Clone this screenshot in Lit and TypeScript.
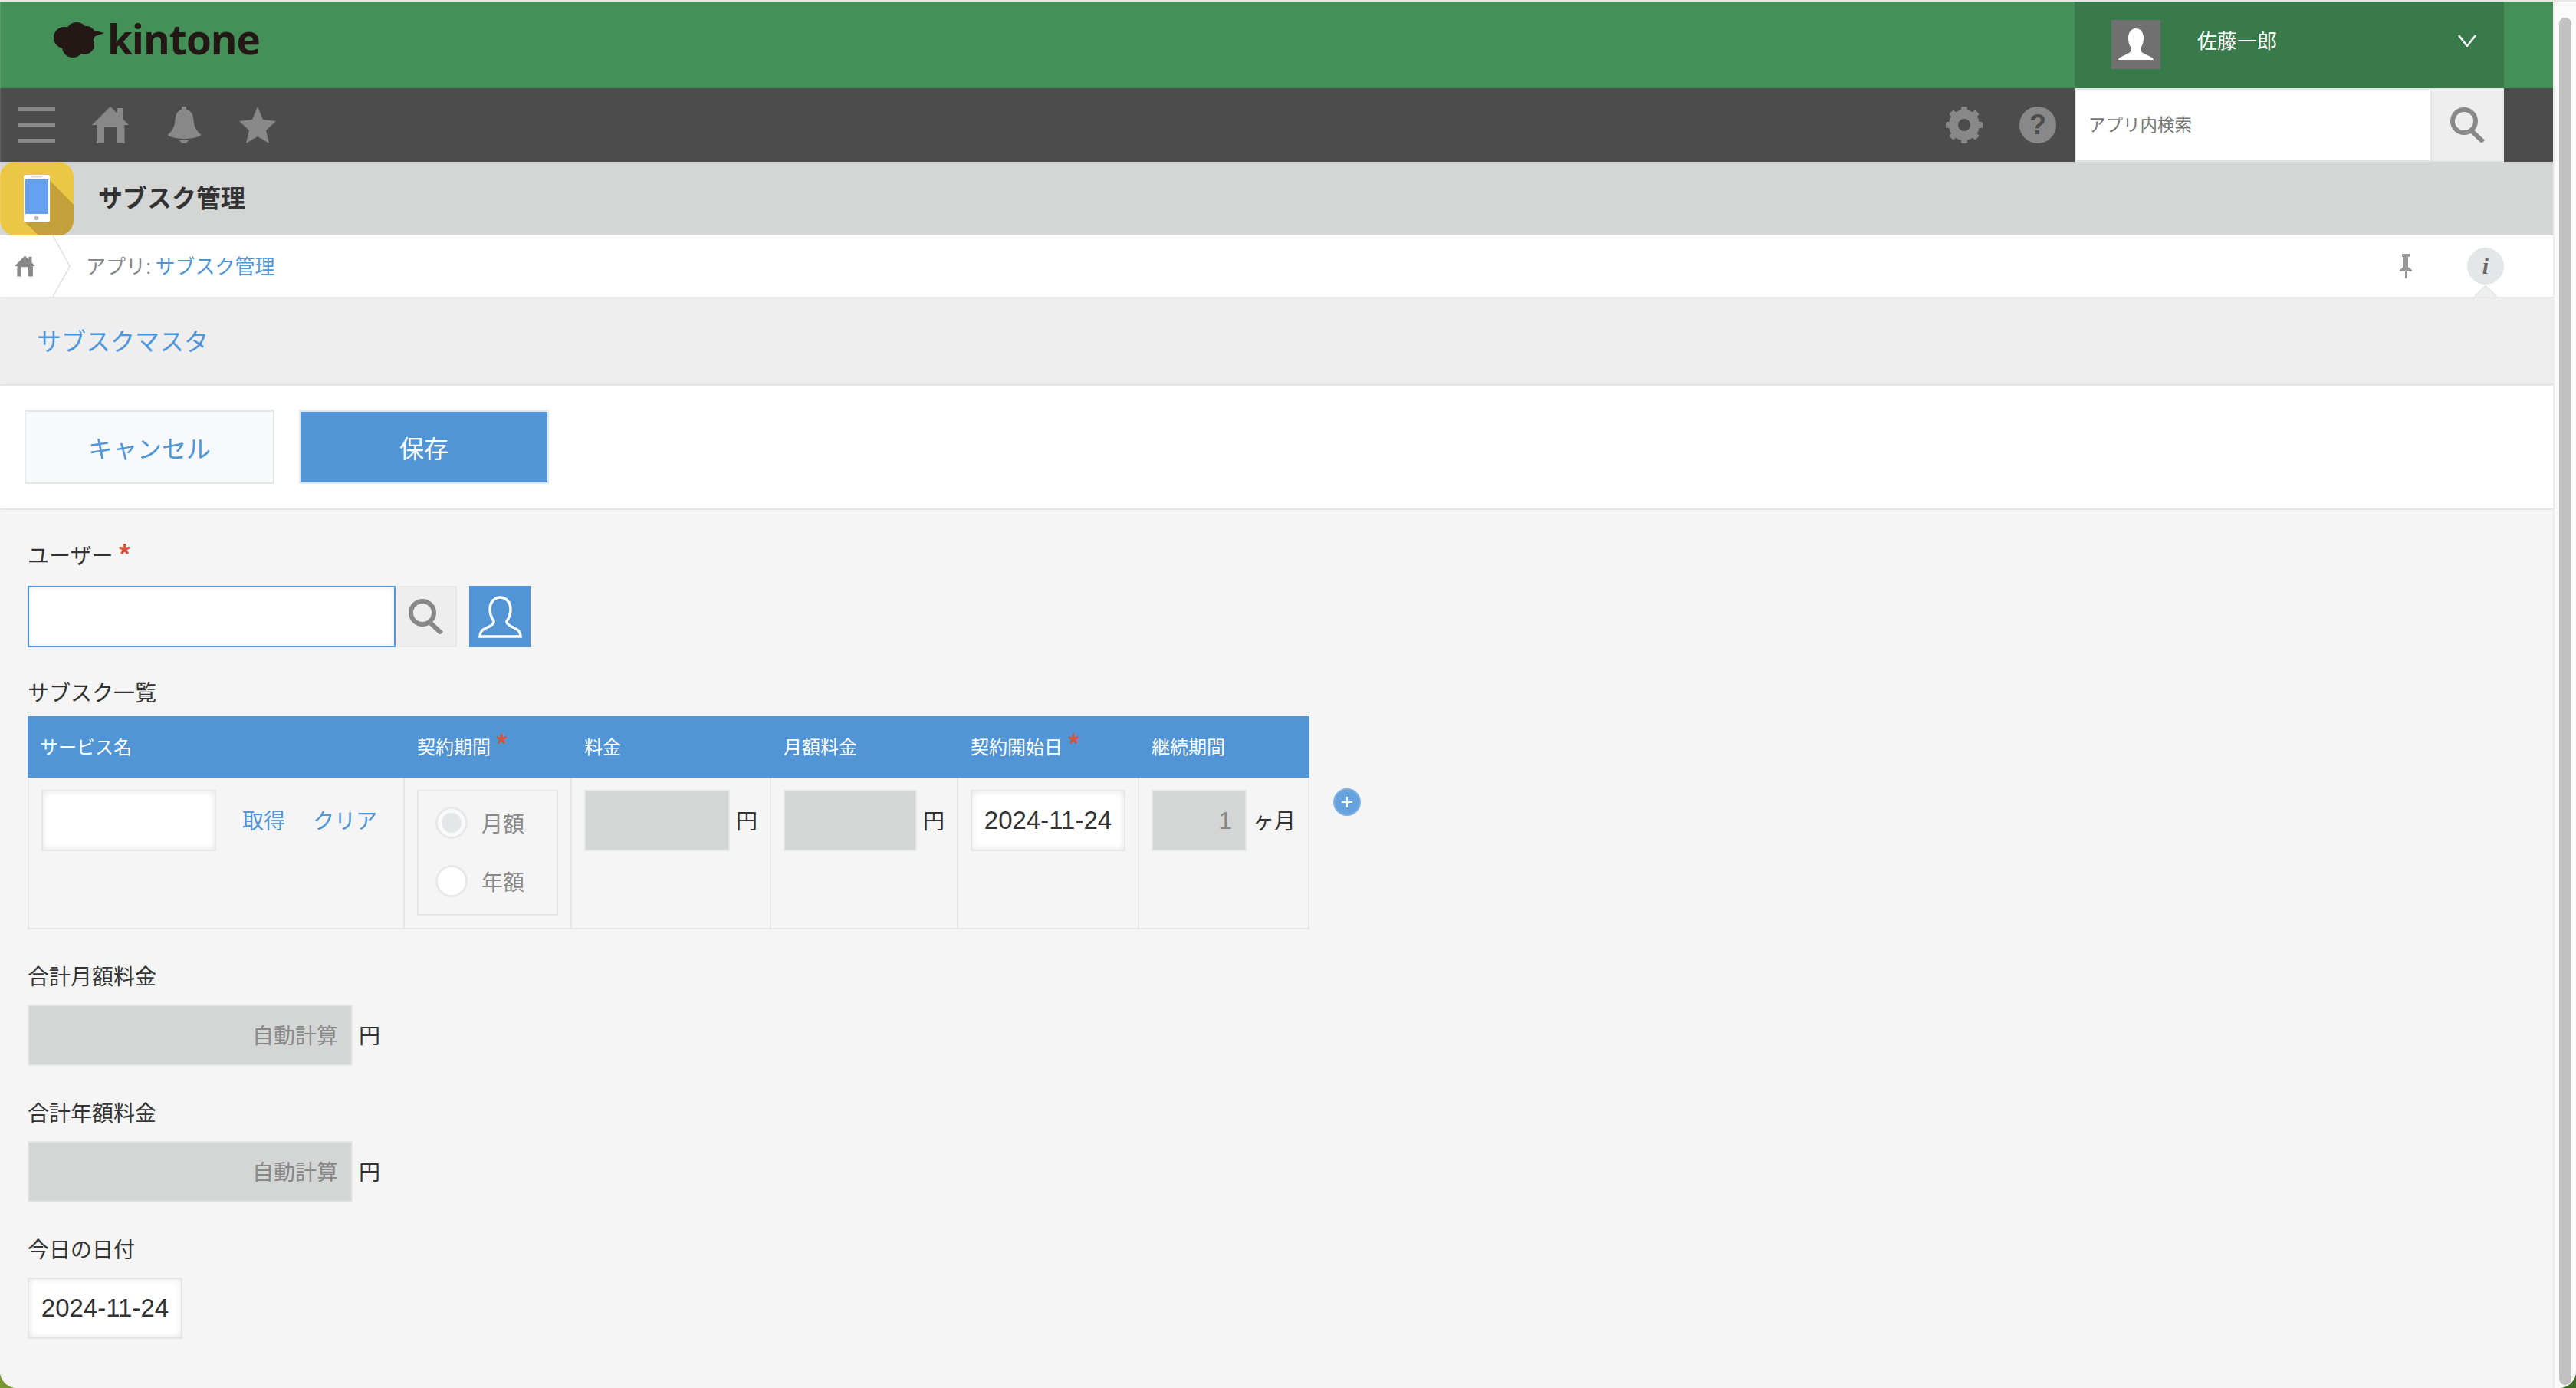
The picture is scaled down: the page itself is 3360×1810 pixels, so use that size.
import { LitElement, html, css, svg } from "lit";
import { customElement } from "lit/decorators.js";

const searchIcon = html`<svg class="search-ic" viewBox="0 0 46 46"><circle cx="19" cy="18" r="15" fill="none" stroke="#888" stroke-width="6"/><path d="M28 30 L44 45" stroke="#888" stroke-width="6" fill="none"/></svg>`;
const homePath = "M24 0 L33 9 V2 H40 V16 L48 24 H42.500 V48 H32 V26 H16 V48 H6 V24 H0 Z";

@customElement("app-root")
export class AppRoot extends LitElement {
  static styles = css`
    :host { display: block; width: 3360px; height: 1810px; overflow: hidden;
      background: linear-gradient(90deg, #76972f, #3f6b24);
      font-family: "Liberation Sans", "Noto Sans CJK JP", sans-serif; color: #333; }
    * { box-sizing: border-box; }
    svg { display: block; flex: none; }
    .window { position: relative; display: flex; height: 1810px; border-top: 2px solid #e6e8e8; border-radius: 0 0 22px 22px; overflow: hidden; background: #f5f5f5; }
    .window::after { content: ""; position: absolute; left: 0; top: 0; bottom: 0; width: 1px; background: rgba(255, 255, 255, 0.12); pointer-events: none; }
    .main { width: 3330px; flex: none; display: flex; flex-direction: column; }
    .scrollbar { flex: 1; background: #fafafa; border-left: 2px solid #ececec; padding: 21px 6px 4px 6px; }
    .thumb { height: 100%; background: #c1c1c1; border-radius: 8px; }

    .greenbar { height: 113px; flex: none; background: #459059; display: flex; align-items: center; padding-left: 70px; padding-right: 64px; }
    .logo { display: flex; align-items: center; gap: 4px; margin-top: -14px; }
    .logotext { font-family: "Open Sans", sans-serif; font-weight: 700; font-size: 53px; line-height: 46px; color: #231815; letter-spacing: -1px; margin-top: -2px; }
    .user { margin-left: auto; width: 560px; height: 113px; background: #397a4b; display: flex; align-items: center; padding-left: 48px; padding-right: 36px; color: #fff; }
    .avatar { width: 64px; height: 64px; background: #707070; margin-top: -2px; }
    .username { font-size: 26px; margin-left: 48px; margin-top: -15px; }
    .chev { margin-left: auto; margin-top: -12px; }

    .darkbar { height: 96px; flex: none; background: #4c4c4c; display: flex; align-items: center; padding-left: 24px; padding-right: 64px; gap: 48px; }
    .dark-ic { width: 48px; height: 48px; fill: #888; }
    .spacer { margin-left: auto; }
    .help { width: 48px; height: 48px; border-radius: 50%; background: #888; color: #4c4c4c; font-weight: 700; font-size: 36px; line-height: 48px; text-align: center; }
    .search { width: 560px; height: 96px; margin-left: -24px; display: flex; border: 2px solid #e3e7e8; background: #e3e7e8; gap: 2px; }
    .search-input { flex: 1; background: #fff; font-size: 22.500px; color: #777; display: flex; align-items: center; padding: 0 0 4px 16px; }
    .search-btn { width: 92px; background: #eee; display: flex; align-items: center; justify-content: center; }
    .search-ic { width: 46px; height: 46px; }

    .titlebar { height: 96px; flex: none; background: #d4d6d5; display: flex; align-items: center; }
    .apptitle { font-size: 32px; font-weight: 700; margin: -6px 0 0 32px; color: #333; }

    .crumb { height: 82px; flex: none; background: #fff; border-bottom: 2px solid #e3e7e8; display: flex; align-items: center; padding-left: 19px; padding-right: 64px; }
    .crumb-home { width: 27px; height: 28px; fill: #888; }
    .crumb-chev { margin-left: 22px; margin-right: 20px; }
    .crumb-text { font-size: 26px; color: #888; margin-top: -3px; word-spacing: -2px; }
    a { color: #4f96d8; text-decoration: none; }
    .pin { margin-left: auto; margin-right: 72px; }
    .info { position: relative; width: 48px; height: 48px; border-radius: 50%; background: #e3e7e8; color: #666; text-align: center; font: italic 700 30px/48px "Liberation Serif", serif; }
    .info-tip { position: absolute; left: 9px; top: 49px; }

    .subhead { height: 114px; flex: none; background: #eee; border-bottom: 3px solid #e3e7e8; display: flex; align-items: center; padding: 0 0 4px 48px; font-size: 32px; }
    .actions { height: 162px; flex: none; background: #fff; border-bottom: 2px solid #e3e7e8; display: flex; gap: 32px; padding: 32px 0 0 32px; }
    .btn { width: 326px; height: 96px; border: 2px solid #e3e7e8; display: flex; align-items: center; justify-content: center; font-size: 32px; padding-bottom: 1px; }
    .btn.cancel { background: #f7f9fa; color: #4f96d8; }
    .btn.save { background: #5295d6; color: #fff; }

    .content { flex: 1; padding: 40px 0 0 36px; background: #f5f5f5; }
    .label { height: 40px; line-height: 40px; font-size: 28px; color: #333; padding-top: 1px; }
    .req { color: #d9533c; font-family: "Noto Sans CJK JP", sans-serif; font-weight: 700; font-size: 36px; line-height: 0; margin-left: 6px; position: relative; top: 3px; }
    .field { margin-top: 42px; }
    .field .label { margin-bottom: 16px; }
    .field.first { margin-top: 0; }
    .field.first .label { margin-bottom: 19px; }
    .field.list { margin-top: 40px; }
    .field.list .label { margin-bottom: 10px; }
    .row { display: flex; align-items: center; height: 80px; }

    .userinput { width: 480px; height: 80px; border: 2px solid #5295d6; background: #fff; box-shadow: inset 0 0 6px #e8e8e8; }
    .lookup { width: 80px; height: 80px; background: #eee; border: 2px solid #e3e7e8; border-left: 0; display: flex; align-items: center; justify-content: center; }
    .userbtn { width: 80px; height: 80px; background: #5295d6; margin-left: 16px; display: flex; align-items: center; justify-content: center; }

    .ctrl { height: 80px; border: 2px solid #e3e7e8; flex: none; font-size: 28px; display: flex; align-items: center; }
    .ctrl.white { background: #fff; box-shadow: inset 0 0 8px #e4e4e4; }
    .ctrl.gray { background: #d4d6d5; color: #888; justify-content: flex-end; padding-right: 17px; padding-bottom: 2px; }
    .ctrl.date { width: 202px; justify-content: center; font-size: 33px; color: #333; }
    .w228 { width: 228px; } .w190 { width: 190px; } .w174 { width: 174px; } .w124 { width: 124px; } .w424 { width: 424px; }
    .ctrl.num { font-size: 32px; padding-right: 17px; padding-bottom: 0; }
    .unit { font-size: 28px; margin-left: 8px; color: #333; margin-top: -2px; }

    .tablewrap { display: flex; align-items: flex-start; }
    .table { width: 1672px; display: grid; grid-template-columns: 492px 218px 260px 244px 236px 222px; }
    .th { height: 80px; background: #5295d6; color: #fff; font-size: 24px; padding: 0 0 3px 16px; display: flex; align-items: center; }
    .th .req { font-size: 34px; margin-left: 6px; top: -3px; }
    .td { height: 198px; padding: 16px 0 0 16px; border-right: 2px solid #e3e7e8; border-bottom: 2px solid #e3e7e8; }
    .td.firstcol { border-left: 2px solid #e3e7e8; }
    .link1 { font-size: 28px; margin: -2px 0 0 34px; }
    .link2 { font-size: 28px; margin: -2px 0 0 36px; }
    .radios { width: 184px; height: 164px; border: 2px solid #e3e7e8; padding: 3px 0 5px 22px; }
    .radio-row { height: 76px; display: flex; align-items: center; font-size: 28px; color: #888; gap: 18px; }
    .radio { width: 42px; height: 42px; border-radius: 50%; border: 3px solid #e6e9ea; background: #fafafa; display: flex; align-items: center; justify-content: center; }
    .radio.off { background: #fff; }
    .dot { width: 26px; height: 26px; border-radius: 50%; background: #e3e7e8; }
    .plus { width: 36px; height: 36px; border-radius: 50%; background: #66a3dd; border: 2px solid #7cb0e2; margin: 94px 0 0 31px; display: flex; align-items: center; justify-content: center; }
  `;

  private gear() {
    const teeth = [0, 45, 90, 135, 180, 225, 270, 315];
    return html`<svg class="dark-ic" viewBox="0 0 48 48">
      <circle cx="24" cy="24" r="14" fill="none" stroke="#888" stroke-width="12"/>
      ${teeth.map((a) => svg`<rect x="20" y="0" width="8" height="8" rx="1.500" transform="rotate(${a} 24 24)"/>`)}
    </svg>`;
  }

  render() {
    return html`
      <div class="window">
        <div class="main">
          <div class="greenbar">
            <div class="logo">
              <svg width="66" height="46" viewBox="0 0 66 46" fill="#231815">
                <circle cx="14" cy="20" r="14"/><circle cx="30" cy="14" r="14"/><circle cx="43" cy="16" r="11"/>
                <circle cx="25" cy="32" r="14"/><circle cx="40" cy="29" r="13"/><path d="M46 9 L66 14 L49 20 Z"/>
              </svg>
              <span class="logotext">kintone</span>
            </div>
            <div class="user">
              <svg class="avatar" viewBox="0 0 64 64"><path fill="#fff" d="M32 11c-6 0-10 5-10 13 0 6 2 10 4 13v2c0 4-8 6-13 9-3 1.500-4 3-4 4H55c0-1-1-2.500-4-4-5-3-13-5-13-9v-2c2-3 4-7 4-13 0-8-4-13-10-13z"/></svg>
              <span class="username">佐藤一郎</span>
              <svg class="chev" width="24" height="16" viewBox="0 0 24 16"><path d="M1 1 L12 15 L23 1" fill="none" stroke="#fff" stroke-width="2.500"/></svg>
            </div>
          </div>

          <div class="darkbar">
            <svg class="dark-ic" viewBox="0 0 48 48"><rect y="0" width="48" height="6"/><rect y="21" width="48" height="6"/><rect y="42" width="48" height="6"/></svg>
            <svg class="dark-ic" viewBox="0 0 48 48"><path d="${homePath}"/></svg>
            <svg class="dark-ic" viewBox="0 0 48 48"><path d="M21 0h6v4c7 1.500 9 7 9.500 13 .6 9 3 14 9 19 .8 1 .2 2-1 2.500C38 41 31 42 24 42S10 41 4.500 38.500C3.300 38 2.700 37 3.500 36c6-5 8.400-10 9-19C13 11 15 5.500 21 4z"/><path d="M18 44h12c-1 2-3 4-6 4s-5-2-6-4z"/></svg>
            <svg class="dark-ic" viewBox="0 0 48 48"><path d="M24 0 L31 17 L48 19 L35 31 L39 48 L24 39 L9 48 L13 31 L0 19 L17 17 Z"/></svg>
            <div class="spacer">${this.gear()}</div>
            <div class="help">?</div>
            <div class="search">
              <div class="search-input">アプリ内検索</div>
              <div class="search-btn">${searchIcon}</div>
            </div>
          </div>

          <div class="titlebar">
            <svg width="96" height="96" viewBox="0 0 96 96">
              <defs><clipPath id="rr"><rect width="96" height="96" rx="20"/></clipPath></defs>
              <g clip-path="url(#rr)">
                <rect width="96" height="96" fill="#ecc645"/>
                <path d="M63 22 L96 56 V96 H50 L33 79 Z" fill="#c3a03a"/>
                <rect x="31" y="17" width="34" height="62" rx="3" fill="#fff"/>
                <rect x="33" y="23" width="30" height="45" fill="#66a0f2"/>
                <rect x="40" y="19" width="15" height="1.500" fill="#ddd"/>
                <circle cx="47.500" cy="73.500" r="2.800" fill="#bbb"/>
              </g>
            </svg>
            <div class="apptitle">サブスク管理</div>
          </div>

          <div class="crumb">
            <svg class="crumb-home" viewBox="0 0 48 48"><path d="${homePath}"/></svg>
            <svg class="crumb-chev" width="24" height="80" viewBox="0 0 24 80"><path d="M1 0 L23 40 L1 80" fill="none" stroke="#e3e7e8" stroke-width="2"/></svg>
            <div class="crumb-text">アプリ: <a>サブスク管理</a></div>
            <svg class="pin" width="16" height="32" viewBox="0 0 16 32" fill="#999"><path d="M3 0H13V4H11V17L16 21V23H9V32H7V23H0V21L5 17V4H3Z"/></svg>
            <div class="info">i
              <svg class="info-tip" width="30" height="16" viewBox="0 0 30 16"><path d="M0 16 L15 1 L30 16 Z" fill="#eee"/><path d="M0 15 L15 1 L30 15" fill="none" stroke="#e3e7e8" stroke-width="2"/></svg>
            </div>
          </div>

          <div class="subhead"><a>サブスクマスタ</a></div>

          <div class="actions">
            <div class="btn cancel">キャンセル</div>
            <div class="btn save">保存</div>
          </div>

          <div class="content">
            <div class="field first">
              <div class="label">ユーザー<span class="req">*</span></div>
              <div class="row">
                <div class="userinput"></div>
                <div class="lookup">${searchIcon}</div>
                <div class="userbtn">
                  <svg width="57" height="55" viewBox="0 0 57 55"><path d="M28.500 2C21 2 15 8 15 18c0 7 3 12 5 15v1c0 4-6 6-10 8C5 44 2 47 2 53H55c0-6-3-9-8-11-4-2-10-4-10-8v-1c2-3 5-8 5-15C42 8 36 2 28.500 2z" fill="none" stroke="#fff" stroke-width="3.500"/></svg>
                </div>
              </div>
            </div>

            <div class="field list">
              <div class="label">サブスク一覧</div>
              <div class="tablewrap">
                <div class="table">
                  <div class="th">サービス名</div>
                  <div class="th">契約期間<span class="req">*</span></div>
                  <div class="th">料金</div>
                  <div class="th">月額料金</div>
                  <div class="th">契約開始日<span class="req">*</span></div>
                  <div class="th">継続期間</div>

                  <div class="td firstcol">
                    <div class="row">
                      <div class="ctrl white w228"></div>
                      <a class="link1">取得</a>
                      <a class="link2">クリア</a>
                    </div>
                  </div>
                  <div class="td">
                    <div class="radios">
                      <div class="radio-row"><span class="radio"><span class="dot"></span></span>月額</div>
                      <div class="radio-row"><span class="radio off"></span>年額</div>
                    </div>
                  </div>
                  <div class="td"><div class="row"><div class="ctrl gray w190"></div><span class="unit">円</span></div></div>
                  <div class="td"><div class="row"><div class="ctrl gray w174"></div><span class="unit">円</span></div></div>
                  <div class="td"><div class="row"><div class="ctrl white date">2024-11-24</div></div></div>
                  <div class="td"><div class="row"><div class="ctrl gray num w124">1</div><span class="unit">ヶ月</span></div></div>
                </div>
                <div class="plus"><svg width="16" height="16" viewBox="0 0 16 16"><path d="M8 1V15M1 8H15" stroke="#fff" stroke-width="2"/></svg></div>
              </div>
            </div>

            <div class="field">
              <div class="label">合計月額料金</div>
              <div class="row"><div class="ctrl gray w424">自動計算</div><span class="unit">円</span></div>
            </div>
            <div class="field">
              <div class="label">合計年額料金</div>
              <div class="row"><div class="ctrl gray w424">自動計算</div><span class="unit">円</span></div>
            </div>
            <div class="field">
              <div class="label">今日の日付</div>
              <div class="row"><div class="ctrl white date">2024-11-24</div></div>
            </div>
          </div>
        </div>
        <div class="scrollbar"><div class="thumb"></div></div>
      </div>
    `;
  }
}
